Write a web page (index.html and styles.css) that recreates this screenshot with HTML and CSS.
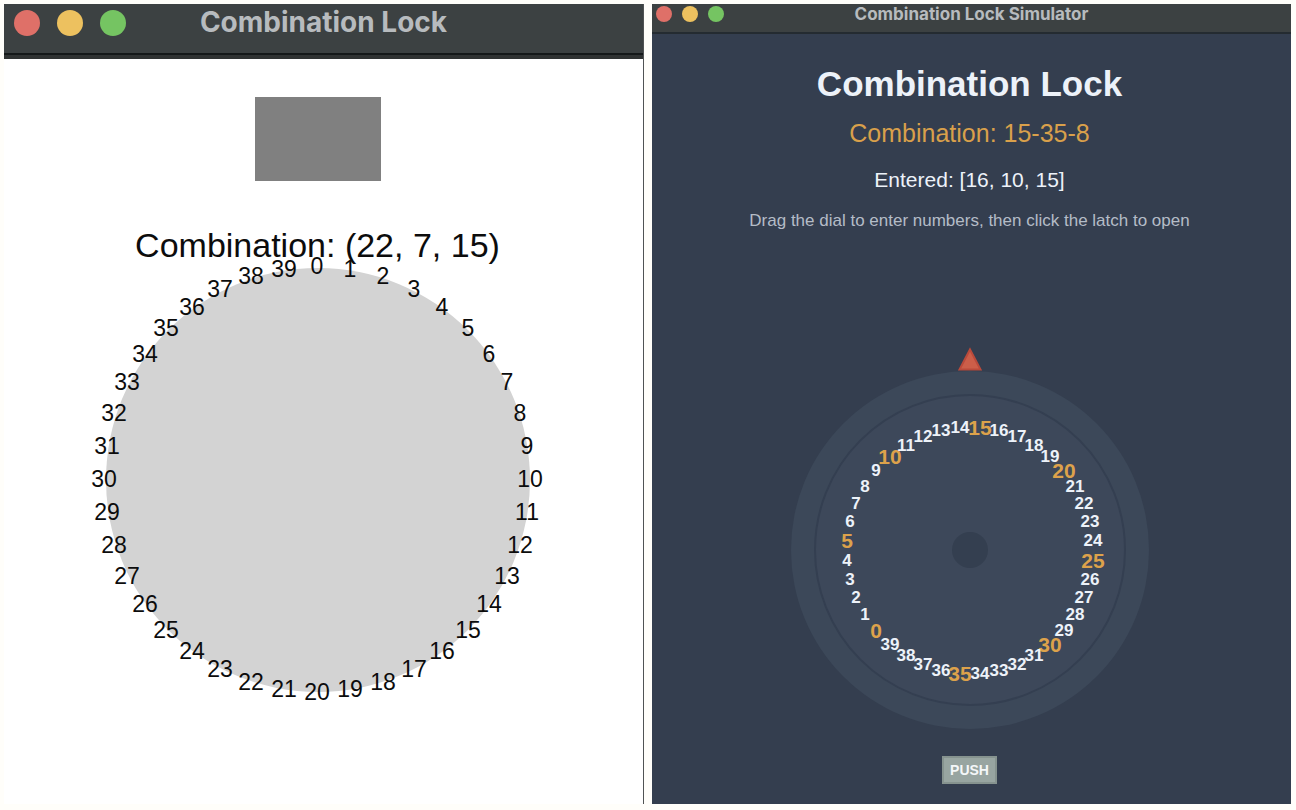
FILE: index.html
```html
<!DOCTYPE html>
<html lang="en">
<head>
<meta charset="utf-8">
<title>Combination Lock</title>
<link rel="stylesheet" href="styles.css">
</head>
<body class="desktop">
<section class="window window-light">
  <header class="titlebar titlebar-large">
    <div class="lights"><span class="light red"></span><span class="light yellow"></span><span class="light green"></span></div>
    <h2 class="window-title">Combination Lock</h2>
  </header>
  <main class="panel panel-light">
    <div class="latch"></div>
    <p class="caption">Combination: (22, 7, 15)</p>
    <svg class="dial dial-light" viewBox="0 0 424 424" role="img" aria-label="Dial" data-radius="213" data-center="211" data-offset="0">
      <circle class="dial-face" cx="212" cy="212" r="212"/>
    </svg>
  </main>
</section>
<section class="window window-dark">
  <header class="titlebar titlebar-small">
    <div class="lights"><span class="light red"></span><span class="light yellow"></span><span class="light green"></span></div>
    <h2 class="window-title">Combination Lock Simulator</h2>
  </header>
  <main class="panel panel-dark">
    <h1 class="heading">Combination Lock</h1>
    <p class="target">Combination: 15-35-8</p>
    <p class="entered">Entered: [16, 10, 15]</p>
    <p class="hint">Drag the dial to enter numbers, then click the latch to open</p>
    <svg class="pointer" viewBox="0 0 24 24" aria-hidden="true"><path d="M12 2.500 22.500 22.500H1.500Z"/></svg>
    <svg class="dial dial-dark" viewBox="0 0 358 358" role="img" aria-label="Dial" data-radius="123" data-center="179" data-offset="-130.5" data-accent="5">
      <circle class="dial-rim" cx="179" cy="179" r="179"/>
      <circle class="dial-ring" cx="179" cy="179" r="155"/>
      <circle class="dial-hub" cx="179" cy="179" r="18"/>
    </svg>
    <button class="push" type="button">PUSH</button>
  </main>
</section>
<script src="dial.js"></script>
</body>
</html>
```
FILE: styles.css
```css
* { box-sizing: border-box; }
.desktop {
  margin: 0;
  min-height: 100vh;
  padding: 4px 5px 6px 4px;
  display: flex;
  gap: 8px;
  background: #fffefa;
  font-family: "Liberation Sans", Arial, sans-serif;
}
.window { flex: 1 1 0; min-width: 0; display: flex; flex-direction: column; }
.window-light { background: #fff; border-right: 1px solid #505354; }
.window-dark { background: #343e4f; }
.titlebar {
  display: grid;
  grid-template-columns: 1fr auto 1fr;
  align-items: start;
  background: #3c4142;
}
.titlebar-large { height: 55px; padding: 0 10px; border-bottom: 4px solid #303333; box-shadow: inset 0 -2px #15191a; }
.titlebar-small { height: 30px; padding: 0 4px; border-bottom: 2px solid #242b31; }
.lights { display: flex; }
.light { border-radius: 50%; }
.titlebar-large .lights { gap: 17px; padding-top: 6px; }
.titlebar-large .light { width: 26px; height: 26px; }
.titlebar-small .lights { gap: 10px; padding-top: 2px; }
.titlebar-small .light { width: 16px; height: 16px; }
.red { background: #df7068; }
.yellow { background: #edc15f; }
.green { background: #75c462; }
.window-title { margin: 0; font-family: Inter, sans-serif; font-weight: 700; color: #b7bbbe; white-space: nowrap; }
.titlebar-large .window-title { font-size: 28px; line-height: 36px; }
.titlebar-small .window-title { font-size: 17px; line-height: 20px; }
.panel { flex: 1; display: flex; flex-direction: column; align-items: center; }
.panel-light { padding: 38px 12px 48px 0; }
.panel-dark { padding: 30px 4px 20px 0; }
.panel p { margin: 0; text-align: center; }
.latch { width: 126px; height: 84px; background: #808080; }
.panel .caption { margin-top: 44px; font-size: 34px; line-height: 40px; color: #0c0c0c; }
.dial { display: block; flex: none; overflow: visible; }
.dial-light { width: 424px; max-width: 80%; margin-top: 3px; }
.dial-dark { width: 358px; max-width: 80%; }
.dial-face { fill: #d3d3d3; }
.dial-rim { fill: #3c4859; }
.dial-ring { fill: #3d485a; stroke: #343f51; stroke-width: 2px; }
.dial-hub { fill: #343f50; }
.number { text-anchor: middle; }
.dial-light .number { font-size: 23px; fill: #0c0c0c; }
.dial-dark .number { font-size: 17px; font-weight: 700; fill: #edf2f9; }
.dial-dark .accent { font-size: 21px; fill: #dda24b; }
.heading { margin: 0; font-size: 35px; line-height: 40px; color: #edf2f9; }
.panel .target { margin-top: 14px; font-size: 25px; line-height: 30px; color: #d9a04b; }
.panel .entered { margin-top: 20px; font-size: 21px; line-height: 24px; color: #edf2f9; }
.panel .hint { margin-top: 19px; font-size: 17px; line-height: 20px; color: #b4bcc7; }
.pointer { width: 24px; height: 24px; margin-top: 116px; fill: #cc5e49; stroke: #ba4a3b; stroke-width: 2px; }
.push {
  margin-top: 27px;
  width: 55px;
  height: 28px;
  padding: 0;
  border: 2px solid #86938f;
  background: #98a5a1;
  color: #f4f7f8;
  font: 700 14px/20px "Liberation Sans", Arial, sans-serif;
}
```
FILE: dial.js
```js
const COUNT = 40;

document.querySelectorAll(".dial").forEach((dial) => {
  const radius = Number(dial.dataset.radius);
  const center = Number(dial.dataset.center);
  const offset = Number(dial.dataset.offset);
  const accentEvery = Number(dial.dataset.accent || 0);

  for (let n = 0; n < COUNT; n++) {
    const angle = ((n * 360) / COUNT + offset) * Math.PI / 180;
    const accent = accentEvery > 0 && n % accentEvery === 0;
    const label = document.createElementNS("http://www.w3.org/2000/svg", "text");
    label.setAttribute("class", accent ? "number accent" : "number");
    label.setAttribute("x", Math.round(center + radius * Math.sin(angle)));
    label.setAttribute("y", Math.round(center - radius * Math.cos(angle)));
    label.setAttribute("dy", "0.36em");
    label.textContent = n;
    dial.appendChild(label);
  }
});
```
